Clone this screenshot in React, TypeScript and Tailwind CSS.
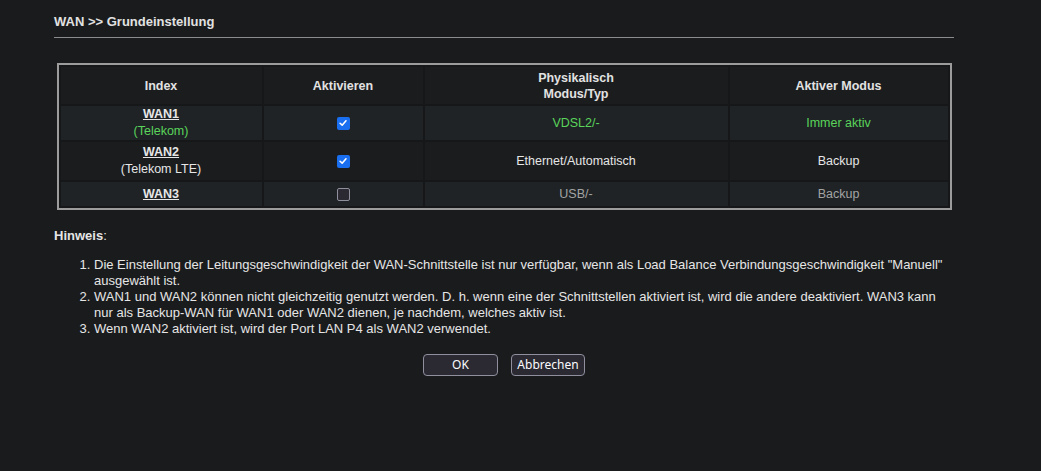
import React from "react";

type WanRow = {
  name: string;
  provider?: string;
  enabled: boolean;
  phys: string;
  mode: string;
  tone: "green" | "white" | "dim";
  alt: boolean;
  height: string;
};

const rows: WanRow[] = [
  { name: "WAN1", provider: "(Telekom)", enabled: true, phys: "VDSL2/-", mode: "Immer aktiv", tone: "green", alt: true, height: "h-[34px]" },
  { name: "WAN2", provider: "(Telekom LTE)", enabled: true, phys: "Ethernet/Automatisch", mode: "Backup", tone: "white", alt: false, height: "h-[38px]" },
  { name: "WAN3", enabled: false, phys: "USB/-", mode: "Backup", tone: "dim", alt: true, height: "h-[24px]" },
];

const toneClass = {
  green: "text-[#5ad45a]",
  white: "text-[#e6e6e6]",
  dim: "text-[#a3a3a3]",
};

function CheckBox({ checked }: { checked: boolean }) {
  if (!checked) {
    return (
      <span className="inline-block h-[13px] w-[13px] rounded-[2px] border border-[#8f8f9d] bg-[#2b2a33] align-middle" />
    );
  }
  return (
    <span className="inline-flex h-[13px] w-[13px] items-center justify-center rounded-[2px] bg-[#1a6ef0] align-middle">
      <svg viewBox="0 0 12 12" className="h-[10px] w-[10px]">
        <path d="M2.5 6.3 L5 8.6 L9.6 3.4" fill="none" stroke="#fff" strokeWidth="1.9" strokeLinecap="round" strokeLinejoin="round" />
      </svg>
    </span>
  );
}

function App() {
  return (
    <div className="min-h-screen bg-[#1a1b1d] font-['Liberation_Sans',Arial,sans-serif] text-[13px] text-[#e6e6e6]">
      <div className="ml-[54px] w-[900px]">
        <div className="border-b border-[#8c8c8c] pt-[14px] pb-[7px] font-bold leading-[16px] text-[#e2e2e2]">
          WAN &gt;&gt; Grundeinstellung
        </div>

        <table className="mx-auto mt-[25px] w-[895px] table-fixed border-separate border-spacing-[2px] border-2 border-[#9c9c9c] bg-[#161719] text-center text-[12.5px]">
          <colgroup>
            <col className="w-[201px]" />
            <col className="w-[159px]" />
            <col className="w-[303px]" />
            <col className="w-[218px]" />
          </colgroup>
          <thead>
            <tr className="h-[37px] bg-[#1b1c1e] font-bold leading-[16px] text-[#e2e2e2]">
              <th>Index</th>
              <th>Aktivieren</th>
              <th>
                Physikalisch
                <br />
                Modus/Typ
              </th>
              <th>Aktiver Modus</th>
            </tr>
          </thead>
          <tbody className="leading-[17px]">
            {rows.map((r) => (
              <tr key={r.name} className={`${r.height} ${r.alt ? "bg-[#1f2326]" : "bg-[#1b1c1e]"}`}>
                <td>
                  <a className="font-bold text-[#e6e6e6] underline">{r.name}</a>
                  {r.provider && (
                    <div className={r.tone === "green" ? "text-[#5ad45a]" : "text-[#e6e6e6]"}>{r.provider}</div>
                  )}
                </td>
                <td>
                  <CheckBox checked={r.enabled} />
                </td>
                <td className={toneClass[r.tone]}>{r.phys}</td>
                <td className={toneClass[r.tone]}>{r.mode}</td>
              </tr>
            ))}
          </tbody>
        </table>

        <div className="mt-[18px] leading-[16px]">
          <span className="font-bold">Hinweis</span>:
        </div>
        <ol className="mt-[13px] mr-[5px] list-decimal pl-[40px] leading-[16px]">
          <li>
            Die Einstellung der Leitungsgeschwindigkeit der WAN-Schnittstelle ist nur verfügbar, wenn als Load Balance
            Verbindungsgeschwindigkeit "Manuell" ausgewählt ist.
          </li>
          <li>
            WAN1 und WAN2 können nicht gleichzeitig genutzt werden. D. h. wenn eine der Schnittstellen aktiviert ist, wird
            die andere deaktiviert. WAN3 kann nur als Backup-WAN für WAN1 oder WAN2 dienen, je nachdem, welches aktiv ist.
          </li>
          <li>Wenn WAN2 aktiviert ist, wird der Port LAN P4 als WAN2 verwendet.</li>
        </ol>

        <div className="mt-[17px] flex justify-center gap-[13px] font-['Noto_Sans',sans-serif]">
          <button className="h-[22px] w-[75px] rounded-[4px] border border-[#8f8f9d] bg-[#2b2a33] text-[12px] leading-none text-[#fbfbfe]">
            OK
          </button>
          <button className="h-[22px] w-[74px] rounded-[4px] border border-[#8f8f9d] bg-[#2b2a33] text-[12px] leading-none text-[#fbfbfe]">
            Abbrechen
          </button>
        </div>
      </div>
    </div>
  );
}

export default App;
